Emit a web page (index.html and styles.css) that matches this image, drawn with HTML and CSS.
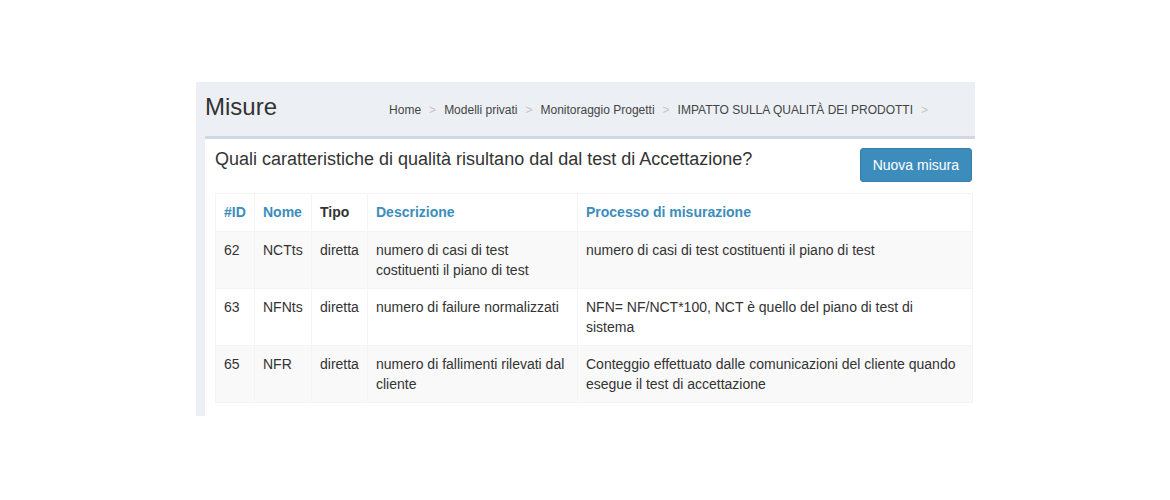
FILE: index.html
```html
<!DOCTYPE html>
<html lang="it">
<head>
<meta charset="utf-8">
<title>Misure</title>
<link rel="stylesheet" href="styles.css">
</head>
<body>
<div class="page">
  <div class="panel">
    <div class="content-header">
      <h1 class="title">Misure</h1>
      <ol class="breadcrumb">
        <li>Home</li><li class="sep">&gt;</li>
        <li>Modelli privati</li><li class="sep">&gt;</li>
        <li>Monitoraggio Progetti</li><li class="sep">&gt;</li>
        <li>IMPATTO SULLA QUALITÀ DEI PRODOTTI</li><li class="sep">&gt;</li>
      </ol>
    </div>
    <div class="box">
      <div class="box-header">
        <h3 class="box-title">Quali caratteristiche di qualità risultano dal dal test di Accettazione?</h3>
        <button class="btn">Nuova misura</button>
      </div>
      <table class="table">
        <colgroup>
          <col class="c-id"><col class="c-nome"><col class="c-tipo"><col class="c-desc"><col class="c-proc">
        </colgroup>
        <thead>
          <tr>
            <th class="link">#ID</th>
            <th class="link">Nome</th>
            <th>Tipo</th>
            <th class="link">Descrizione</th>
            <th class="link">Processo di misurazione</th>
          </tr>
        </thead>
        <tbody>
          <tr class="odd">
            <td>62</td><td>NCTts</td><td>diretta</td>
            <td>numero di casi di test costituenti il piano di test</td>
            <td>numero di casi di test costituenti il piano di test</td>
          </tr>
          <tr>
            <td>63</td><td>NFNts</td><td>diretta</td>
            <td>numero di failure normalizzati</td>
            <td>NFN= NF/NCT*100, NCT è quello del piano di test di sistema</td>
          </tr>
          <tr class="odd">
            <td>65</td><td>NFR</td><td>diretta</td>
            <td>numero di fallimenti rilevati dal cliente</td>
            <td>Conteggio effettuato dalle comunicazioni del cliente quando esegue il test di accettazione</td>
          </tr>
        </tbody>
      </table>
    </div>
  </div>
</div>
</body>
</html>
```

FILE: styles.css
```css
* { box-sizing: border-box; }

body {
  margin: 0;
  background: #ffffff;
  font-family: "Liberation Sans", Arial, Helvetica, sans-serif;
  font-size: 14px;
  color: #333333;
}

.page {
  padding: 82px 0 0 196px;
}

.panel {
  width: 779px;
  height: 334px;
  background: #ecf0f5;
  overflow: hidden;
  display: flex;
  flex-direction: column;
}

.content-header {
  height: 54px;
  display: flex;
  align-items: center;
  padding: 0 0 4px 9px;
}

.title {
  margin: 0;
  font-size: 24px;
  font-weight: normal;
  line-height: 26px;
  color: #333333;
}

.breadcrumb {
  list-style: none;
  margin: 0 0 0 auto;
  padding: 5px 39px 0 0;
  display: flex;
  font-size: 12px;
  line-height: 16px;
  color: #444444;
}

.breadcrumb .sep {
  color: #c4c4c4;
  margin: 0 8px;
}

.box {
  flex: 1;
  margin-left: 9px;
  background: #ffffff;
  border-top: 3px solid #d2d6de;
  padding: 0 3px 0 10px;
}

.box-header {
  display: flex;
  justify-content: space-between;
  align-items: flex-start;
  padding-top: 9px;
}

.box-title {
  margin: 0;
  font-size: 18px;
  font-weight: normal;
  line-height: 22px;
  color: #333333;
}

.btn {
  height: 34px;
  padding: 6px 12px;
  font-family: inherit;
  font-size: 14px;
  line-height: 20px;
  color: #ffffff;
  background: #3c8dbc;
  border: 1px solid #367fa9;
  border-radius: 3px;
}

.table {
  margin-top: 11px;
  width: 757px;
  border-collapse: collapse;
  table-layout: fixed;
  border: 1px solid #f4f4f4;
}

.c-id { width: 39px; }
.c-nome { width: 57px; }
.c-tipo { width: 56px; }
.c-desc { width: 210px; }
.c-proc { width: 395px; }

.table th,
.table td {
  border: 1px solid #f4f4f4;
  padding: 8px;
  line-height: 20px;
  text-align: left;
  vertical-align: top;
}

.table th {
  padding-bottom: 9px;
  font-weight: bold;
  color: #333333;
}

.table th.link {
  color: #3c8dbc;
}

.table tr.odd td {
  background: #f9f9f9;
}
```
